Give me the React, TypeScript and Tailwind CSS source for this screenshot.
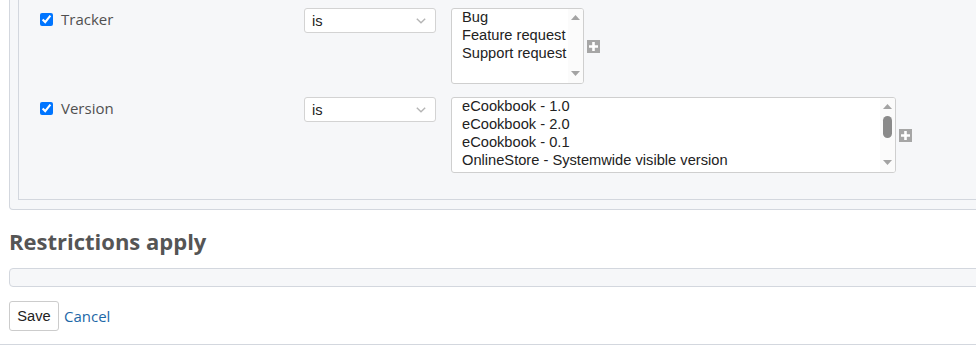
import React from "react";

const arial = "font-['Liberation_Sans',Arial,sans-serif]";

function Chevron() {
  return (
    <svg width="10" height="6" viewBox="0 0 10 6" className="shrink-0">
      <path d="M0.8 0.8 L5 4.8 L9.2 0.8" fill="none" stroke="#b5b5b5" strokeWidth="1.4" />
    </svg>
  );
}

function Arrow({ up }: { up?: boolean }) {
  return (
    <svg width="9" height="5" viewBox="0 0 9 5" className="mx-auto block">
      <path d={up ? "M0 5 L4.5 0 L9 5 Z" : "M0 0 L9 0 L4.5 5 Z"} fill="#a3a3a3" />
    </svg>
  );
}

function Plus() {
  return (
    <span className="ml-[3px] flex h-[13px] w-[13px] items-center justify-center bg-[#a6a6a6]">
      <svg width="9" height="9" viewBox="0 0 9 9">
        <path d="M3.2 0h2.6v3.2H9v2.6H5.8V9H3.2V5.8H0V3.2h3.2z" fill="#fff" />
      </svg>
    </span>
  );
}

function OperatorSelect() {
  return (
    <div
      className={`${arial} flex h-[25px] w-[132px] shrink-0 items-center justify-between rounded-[3px] border border-[#d3d3d3] bg-white pl-[7px] pr-[9px] text-[14.67px] text-[#222]`}
    >
      <span className="pt-px">is</span>
      <Chevron />
    </div>
  );
}

function ListBox({ width, options, thumb }: { width: string; options: string[]; thumb?: boolean }) {
  return (
    <div className={`${arial} flex h-[76px] ${width} overflow-hidden rounded-[3px] border border-[#cfcfcf] bg-white text-[14.67px] text-[#222]`}>
      <div className="flex-1 overflow-hidden pl-[10px]">
        {options.map((o) => (
          <div key={o} className="h-[18px] whitespace-nowrap leading-[17px]">
            {o}
          </div>
        ))}
      </div>
      <div className="flex w-[15px] flex-col bg-[#fbfbfb] pb-[7px] pt-[6px]">
        <Arrow up />
        {thumb && <div className="mx-auto mt-[7px] h-[22px] w-[9px] rounded-full bg-[#8a8a8a]" />}
        <div className="flex-1" />
        <Arrow />
      </div>
    </div>
  );
}

function FilterRow({ label, children }: { label: string; children: React.ReactNode }) {
  return (
    <div className="flex items-start">
      <label className="flex w-[264px] shrink-0 items-center gap-2 pt-px text-[15px] leading-[20px] text-[#505050]">
        <input type="checkbox" defaultChecked className="m-0 h-[13px] w-[13px]" />
        <span>{label}</span>
      </label>
      <OperatorSelect />
      <div className="ml-[15px] flex items-center">{children}</div>
    </div>
  );
}

export default function App() {
  return (
    <div className="h-[351px] w-[976px] overflow-hidden bg-white font-['Open_Sans',sans-serif] text-[#555]">
      <div className="pl-[9px]">
        <div className="-mr-5 rounded-b-[4px] border border-t-0 border-[#d3d7de] bg-[#f6f7f9] pb-[9px] pl-[8px]">
          <div className="flex flex-col gap-[13px] border-b border-l border-[#d3d7de] pb-[26px] pl-[21px] pt-[8px]">
            <FilterRow label="Tracker">
              <ListBox width="w-[133px]" options={["Bug", "Feature request", "Support request"]} />
              <Plus />
            </FilterRow>
            <FilterRow label="Version">
              <ListBox
                width="w-[445px]"
                thumb
                options={[
                  "eCookbook - 1.0",
                  "eCookbook - 2.0",
                  "eCookbook - 0.1",
                  "OnlineStore - Systemwide visible version",
                ]}
              />
              <Plus />
            </FilterRow>
          </div>
        </div>

        <h3 className="mt-[17px] text-[22px] font-bold leading-[28px] text-[#555]">Restrictions apply</h3>

        <div className="-mr-5 mt-[13px] h-[19px] rounded-[4px] border border-[#d3d7de] bg-[#f6f7f9]" />

        <div className="mt-[14px] flex items-center">
          <button
            type="button"
            className={`${arial} h-[30px] w-[50px] rounded-[3px] border border-[#cccccc] bg-white text-[14.67px] text-[#222]`}
          >
            Save
          </button>
          <a href="#" className="ml-[5px] text-[15px] leading-[20px] text-[#1d68a7]">
            Cancel
          </a>
        </div>
      </div>
      <div className="mt-[13px] border-t border-[#d3d7de]" />
    </div>
  );
}
